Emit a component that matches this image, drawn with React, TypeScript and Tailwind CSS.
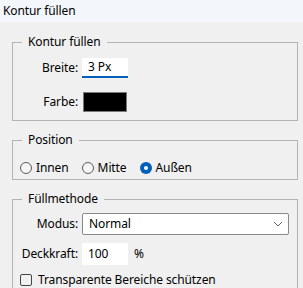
import React from "react";

const Radio = ({ label, checked }: { label: string; checked?: boolean }) => (
  <label className="flex items-center gap-[4px]">
    {checked ? (
      <span className="flex h-[12px] w-[12px] items-center justify-center rounded-full bg-[#005fb8]">
        <span className="h-[4px] w-[4px] rounded-full bg-white" />
      </span>
    ) : (
      <span className="h-[12px] w-[12px] rounded-full border border-[#5c5c5c] bg-[#f5f5f5]" />
    )}
    <span>{label}</span>
  </label>
);

const Group = ({
  title,
  className,
  children,
}: {
  title: string;
  className?: string;
  children: React.ReactNode;
}) => (
  <fieldset className={`ml-[12px] mr-[5px] border border-[#b4b4b4] ${className ?? ""}`}>
    <legend className="ml-[9px] px-[6px] leading-[16px]">{title}</legend>
    {children}
  </fieldset>
);

export default function App() {
  return (
    <div
      className="h-[288px] w-[303px] overflow-hidden bg-[#f0f0f0] text-[12px] tracking-[-0.1px] text-[#000]"
      style={{ fontFamily: '"Noto Sans", "Segoe UI", sans-serif' }}
    >
      <div className="flex h-[22px] items-center bg-[#f3f6fb] pl-[3px]">Kontur füllen</div>

      <Group title="Kontur füllen" className="mt-[12px] pb-[8px]">
        <div className="mt-[8px] flex items-center">
          <span className="w-[65px] text-right">Breite:</span>
          <div className="ml-[4px] flex h-[20px] w-[46px] items-center border-b-2 border-[#005fb8] bg-white pl-[6px]">
            3 Px
          </div>
        </div>
        <div className="mt-[14px] flex items-center">
          <span className="w-[65px] text-right">Farbe:</span>
          <div className="ml-[5px] h-[20px] w-[44px] border border-[#7a7a7a] bg-black" />
        </div>
      </Group>

      <Group title="Position" className="mt-[11px] pb-[3px]">
        <div className="mt-[12px] flex h-[16px] items-center gap-[13px] pl-[7px]">
          <Radio label="Innen" />
          <Radio label="Mitte" />
          <Radio label="Außen" checked />
        </div>
      </Group>

      <Group title="Füllmethode" className="mt-[11px] pb-[8px]">
        <div className="mt-[6px] flex items-center">
          <span className="w-[65px] text-right">Modus:</span>
          <div className="ml-[4px] flex h-[22px] w-[207px] items-center justify-between rounded-[2px] border border-[#8a8a8a] bg-white pl-[6px] pr-[5px]">
            <span>Normal</span>
            <svg width="10" height="6" viewBox="0 0 10 6" fill="none">
              <path d="M1 1l4 4 4-4" stroke="#606060" strokeWidth="1" />
            </svg>
          </div>
        </div>
        <div className="mt-[8px] flex items-center">
          <span className="w-[65px] text-right">Deckkraft:</span>
          <div className="ml-[4px] flex h-[22px] w-[46px] items-center bg-white pl-[6px]">100</div>
          <span className="ml-[6px]">%</span>
        </div>
        <div className="mt-[7px] flex h-[16px] items-center pl-[7px] leading-[16px]">
          <span className="h-[12px] w-[12px] rounded-[2px] border border-[#444]" />
          <span className="ml-[6px]">Transparente Bereiche schützen</span>
        </div>
      </Group>
    </div>
  );
}
